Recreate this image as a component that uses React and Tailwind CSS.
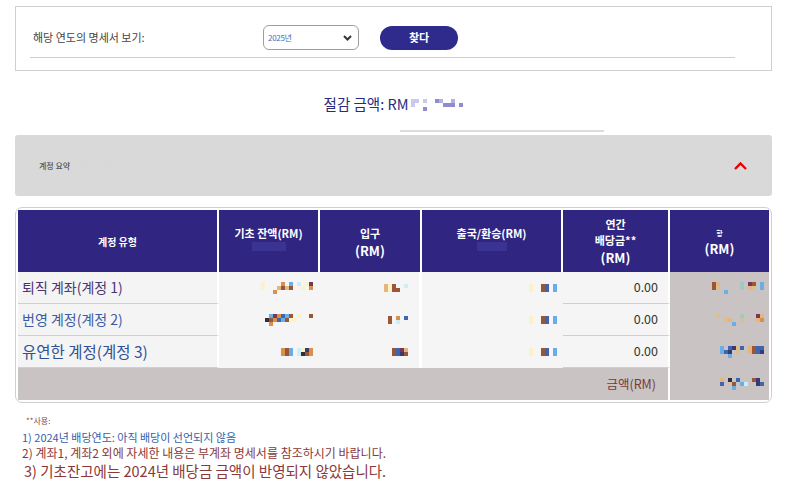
import React from 'react';

// palette for the blurred (mosaic) values
const PAL = {
  y: '#fbf3c8', o: '#d8904a', b: '#9a5636', l: '#6aaee6', c: '#cdeff4',
  p: '#7a3658', d: '#2f2f3a', B: '#3c66b0', s: '#d9c08e', g: '#9fcac2',
  n: '#3b3a70', t: '#e6b57e', v: '#c9c9ec', m: '#8e8ecf', w: '#b2b2e0'
};

function Mosaic({ rows, size = 4 }) {
  const w = Math.max(...rows.map((r) => r.length)) * size;
  const h = rows.length * size;
  return (
    <svg width={w} height={h} className="block">
      {rows.map((r, ri) =>
        r.split('').map((ch, ci) =>
          ch === '.' ? null : (
            <rect key={ri + '-' + ci} x={ci * size} y={ri * size} width={size} height={size} fill={PAL[ch]} />
          )
        )
      )}
    </svg>
  );
}

const body = [
  {
    name: '퇴직 계좌(계정 1)',
    cls: 'text-[14px] text-[#4b3471]',
    a: ['y....o.l.c.yp', 'y...tbsb..y.o', '...o.........'],
    b: ['tyb..c', 'tybb..'],
    c: ['y..bB.l', 'y..bB.l'],
    d: ['bt.....g.pb.l', 'bs.....g.ts.l', '...l.........']
  },
  {
    name: '번영 계정(계정 2)',
    cls: 'text-[14px] text-[#3a5ba3]',
    a: ['..lpoBlb.y..b', '.dboBlbyy....', '..o..........'],
    b: ['b.o.B', 'b.c..'],
    c: ['y..bB.l', 'y..bB.l'],
    d: ['s.....g...pt', '..st..s...to', '....l.......']
  },
  {
    name: '유연한 계정(계정 3)',
    cls: 'text-[15.5px] text-[#2f5194]',
    a: ['obl.cyno', 'obl.cdbo'],
    b: ['bBpt', 'bBnb'],
    c: ['y..bB.l', 'y..bB.l'],
    d: ['l.BnsB.tbBB', 'lBn.s..tbBn', '..l........']
  }
];

export default function App() {
  return (
    <div className="w-[787px] h-[484px] overflow-hidden bg-white px-[15px] pt-[6px] font-['Noto_Sans_CJK_KR','Noto_Sans',sans-serif]">
      {/* 연도 선택 */}
      <div className="h-[65px] border border-[#cfcfcf] pt-[18px]">
        <div className="flex items-center h-[25px] pl-[17px]">
          <span className="w-[230px] text-[11px] text-[#444]">해당 연도의 명세서 보기:</span>
          <div className="flex items-center justify-between w-[96px] h-[25px] rounded-[6px] border border-[#9d9d9d] pl-[4px] pr-[6px]">
            <span className="text-[8px] text-[#3a6fc0] tracking-[-0.3px]">2025년</span>
            <svg width="9" height="6" viewBox="0 0 9 6">
              <path d="M1 1l3.5 3.5L8 1" fill="none" stroke="#333" strokeWidth="2" />
            </svg>
          </div>
          <button className="ml-[21px] w-[78px] h-[24px] rounded-full bg-[#2e2b8c] text-white text-[11px] font-bold">
            찾다
          </button>
        </div>
        <div className="ml-[14px] w-[705px] mt-[7px] border-t border-[#d0d0d0]"></div>
      </div>

      {/* 절감 금액 */}
      <div className="flex justify-center items-center pt-[23px] h-[43px]">
        <span className="text-[14.5px] leading-[20px] text-[#2a2a80]">절감 금액: RM</span>
        <div className="ml-[3px] mt-[2px]">
          <Mosaic rows={['vv.v..mw..w', 'v.......mmm.m', '...m.........']} size={4} />
        </div>
      </div>
      <div className="ml-[385px] w-[204px] h-[2px] bg-[#dcdcdc] mt-[16px]"></div>

      {/* 계정 요약 */}
      <div className="mt-[3px] h-[61px] rounded-[3px] bg-[#d9d9d9] flex items-center justify-between pl-[24px] pr-[25px]">
        <span className="text-[8px] text-[#333]">
          계정 요약 <span className="text-[#d2d2d2]">· · · · · · ·</span>
        </span>
        <svg width="13" height="8" viewBox="0 0 13 8">
          <path d="M1 7L6.5 1.5 12 7" fill="none" stroke="#e60000" strokeWidth="2.4" />
        </svg>
      </div>

      {/* 계정 표 */}
      <div className="mt-[11px] rounded-[7px] border border-[#cfcfcf] p-[2px]">
        <div className="grid grid-cols-[201px_101px_102px_141px_107px_99px] grid-rows-[62px_32px_32px_32px_32px]">
          <div className="bg-[#302682] border-r-2 border-white flex items-center justify-center text-white text-[10px] font-bold">
            계정 유형
          </div>
          <div className="bg-[#302682] border-r-2 border-white flex flex-col items-center pt-[15px] text-white text-[11px] font-bold leading-[16px]">
            <span>기초 잔액(RM)</span>
            <span className="mt-[1px] w-[34px] h-[9px] bg-[#3a3392]"></span>
          </div>
          <div className="bg-[#302682] border-r-2 border-white flex flex-col items-center pt-[15px] text-white font-bold leading-[17px]">
            <span className="text-[11px]">입구</span>
            <span className="text-[13px]">(RM)</span>
          </div>
          <div className="bg-[#302682] border-r-2 border-white flex flex-col items-center pt-[15px] text-white text-[11px] font-bold leading-[16px]">
            <span>출국/환승(RM)</span>
            <span className="mt-[1px] w-[30px] h-[9px] bg-[#3a3392]"></span>
          </div>
          <div className="bg-[#302682] border-r-2 border-white flex flex-col items-center pt-[6px] text-white font-bold leading-[16px]">
            <span className="text-[11px]">연간</span>
            <span className="text-[11px]">배당금**</span>
            <span className="text-[13px] mt-[2px]">(RM)</span>
          </div>
          <div className="bg-[#302682] flex flex-col items-center pt-[18px] text-white font-bold">
            <span className="text-[7px] leading-[10px]">항</span>
            <span className="text-[13px] leading-[18px] mt-[2px]">(RM)</span>
          </div>

          {body.map((r) => (
            <React.Fragment key={r.name}>
              <div className={'bg-[#f4f4f4] border-r-2 border-white border-b border-b-[#cfcfcf] flex items-center pl-[4px] ' + r.cls}>
                {r.name}
              </div>
              <div className="bg-[#f5f5f5] flex items-center justify-end pr-[7px]">
                <Mosaic rows={r.a} />
              </div>
              <div className="bg-[#f5f5f5] border-r-[3px] border-white flex items-center justify-end pr-[11px]">
                <Mosaic rows={r.b} />
              </div>
              <div className="bg-[#f5f5f5] flex items-center justify-end pr-[6px]">
                <Mosaic rows={r.c} />
              </div>
              <div className="bg-[#f5f5f5] border-r-2 border-white border-b border-b-[#cfcfcf] flex items-center justify-end pr-[10px] text-[12.5px] text-[#333]">
                0.00
              </div>
              <div className="bg-[#c9c3c3] flex items-center justify-end pr-[5px]">
                <Mosaic rows={r.d} />
              </div>
            </React.Fragment>
          ))}

          <div className="col-span-5 bg-[#c9c3c3] border-r-2 border-white flex items-center justify-end pr-[12px] text-[12.5px] text-[#7a3a3a]">
            금액(RM)
          </div>
          <div className="bg-[#c9c3c3] flex items-center justify-end pr-[5px]">
            <Mosaic rows={['t.d.B...bn.', 'B..b.lc..nB', '...l.......']} />
          </div>
        </div>
      </div>

      {/* 주석 */}
      <div className="mt-[12px] pl-[7px]">
        <div className="pl-[4px] text-[8px] leading-[12px] text-[#8b4a4a]">**사용:</div>
        <div className="mt-[2px] text-[11px] leading-[16px] text-[#3560a8]">1) 2024년 배당연도: 아직 배당이 선언되지 않음</div>
        <div className="text-[12px] leading-[16px] text-[#8a3838]">2) 계좌1, 계좌2 외에 자세한 내용은 부계좌 명세서를 참조하시기 바랍니다.</div>
        <div className="pl-[2px] text-[14.5px] leading-[20px] text-[#8a3838]">3) 기초잔고에는 2024년 배당금 금액이 반영되지 않았습니다.</div>
      </div>
    </div>
  );
}
